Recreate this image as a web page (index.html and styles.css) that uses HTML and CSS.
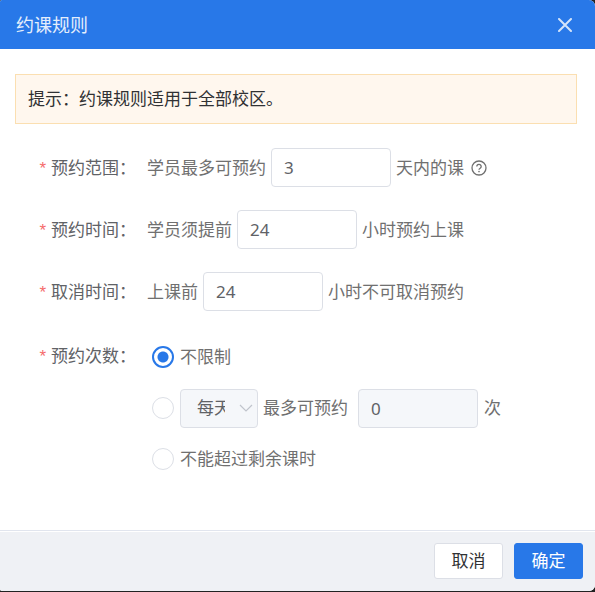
FILE: index.html
```html
<!DOCTYPE html>
<html lang="zh-CN">
<head>
  <meta charset="UTF-8">
  <meta name="viewport" content="width=device-width, initial-scale=1.0">
  <title>约课规则</title>
  <link rel="stylesheet" href="styles.css">
</head>
<body>
  <form class="dialog">
    <header class="dialog-header">
      <h1>约课规则</h1>
      <button type="button" class="close" aria-label="关闭">
        <svg width="14" height="14" viewBox="0 0 14 14"><path d="M1 1l12 12M13 1L1 13" stroke="currentColor" stroke-width="2" stroke-linecap="round"/></svg>
      </button>
    </header>

    <main class="dialog-body">
      <p class="tip">提示：约课规则适用于全部校区。</p>

      <div class="form-item">
        <label class="label" for="range">预约范围：</label>
        <div class="content">
          <span>学员最多可预约</span>
          <input type="text" id="range" class="input" value="3">
          <span>天内的课</span>
          <svg class="help" width="16" height="16" viewBox="0 0 16 16" fill="none" stroke="currentColor">
            <circle cx="8" cy="8" r="7" stroke-width="1.3"/>
            <path d="M5.800 6.500a2.200 2.100 0 1 1 3.400 1.700C8.400 8.700 8 9 8 9.800" stroke-width="1.300"/>
            <circle cx="8" cy="11.600" r=".8" fill="currentColor" stroke="none"/>
          </svg>
        </div>
      </div>

      <div class="form-item">
        <label class="label" for="before">预约时间：</label>
        <div class="content">
          <span>学员须提前</span>
          <input type="text" id="before" class="input" value="24">
          <span>小时预约上课</span>
        </div>
      </div>

      <div class="form-item">
        <label class="label" for="cancel">取消时间：</label>
        <div class="content">
          <span>上课前</span>
          <input type="text" id="cancel" class="input" value="24">
          <span>小时不可取消预约</span>
        </div>
      </div>

      <div class="form-item" role="radiogroup" aria-labelledby="times">
        <span class="label label-group" id="times">预约次数：</span>
        <div class="options">
          <label class="option"><input type="radio" name="times" class="radio" checked>不限制</label>
          <div class="option">
            <input type="radio" name="times" class="radio" aria-label="限制次数">
            <span class="select-box">
              <select class="select" aria-label="周期" disabled>
                <option>每天</option>
                <option>每周</option>
                <option>每月</option>
              </select>
              <svg class="arrow" width="14" height="8" viewBox="0 0 14 8"><path d="M1 1l6 6 6-6" fill="none" stroke="currentColor" stroke-width="1.2"/></svg>
            </span>
            <label class="limit" for="limit">最多可预约</label>
            <input type="text" id="limit" class="input" value="0" disabled>
            <span>次</span>
          </div>
          <label class="option"><input type="radio" name="times" class="radio">不能超过剩余课时</label>
        </div>
      </div>
    </main>

    <footer class="dialog-footer">
      <button type="button" class="btn">取消</button>
      <button type="submit" class="btn btn-primary">确定</button>
    </footer>
  </form>
</body>
</html>
```

FILE: styles.css
```css
* {
  box-sizing: border-box;
}
body {
  margin: 0;
  background: #222;
  font-family: "Noto Sans", "Noto Sans CJK SC", sans-serif;
  font-size: 17px;
  line-height: 24px;
  color: #606266;
}
input, select, button {
  font: inherit;
  color: inherit;
}
.dialog {
  display: flex;
  flex-direction: column;
  min-height: calc(100vh - 1px);
  background: #fff;
  border-radius: 2px 6px 6px 2px;
  overflow: hidden;
}
.dialog-header {
  display: flex;
  align-items: center;
  justify-content: space-between;
  height: 49px;
  padding: 0 16px;
  background: #2878e8;
  color: #e4eefc;
}
.dialog-header h1 {
  margin: 0;
  font-size: 18px;
  font-weight: 400;
}
.close {
  display: flex;
  padding: 7px;
  border: none;
  background: none;
  color: #d4e4fa;
  cursor: pointer;
}
.dialog-body {
  flex: 1;
  padding: 25px 18px 16px 15px;
}
.tip {
  margin: 0 0 24px;
  padding: 12px;
  border: 1px solid #fbdfb1;
  background: #fff7ee;
  color: #303133;
}
.form-item {
  display: flex;
  margin-bottom: 23px;
}
.label {
  width: 132px;
  padding-right: 11px;
  line-height: 39px;
  text-align: right;
  white-space: nowrap;
}
.label::before {
  content: "*";
  margin-right: 5px;
  font-family: "Liberation Sans", Arial, sans-serif;
  line-height: 1;
  color: #f56c6c;
}
.label-group {
  line-height: 44px;
}
.content, .option {
  display: flex;
  align-items: center;
  gap: 6px;
  white-space: nowrap;
  color: #707070;
}
.content {
  gap: 5px;
}
.help {
  margin-left: 2px;
}
.input {
  width: 120px;
  height: 39px;
  padding: 0 12px;
  border: 1px solid #dcdfe6;
  border-radius: 4px;
  background: #fff;
  color: #606266;
}
.input:disabled, .select:disabled {
  background: #f5f7fa;
  color: #606266;
  opacity: 1;
}
.options {
  display: grid;
  gap: 11px;
  padding: 3px 0 0 5px;
}
.option {
  min-height: 40px;
}
.radio {
  appearance: none;
  width: 22px;
  height: 22px;
  margin: 0;
  border: 1px solid #dcdfe6;
  border-radius: 50%;
  background: #fff;
}
.radio:checked {
  border: 2px solid #2878e8;
  background: radial-gradient(circle, #2878e8 5px, #fff 6px);
}
.select-box {
  position: relative;
}
.select {
  appearance: none;
  display: block;
  width: 78px;
  height: 39px;
  padding: 0 32px 0 16px;
  border: 1px solid #dcdfe6;
  border-radius: 4px;
}
.arrow {
  position: absolute;
  top: 15px;
  right: 5px;
  color: #c0c4cc;
  pointer-events: none;
}
.limit {
  margin: 0 4px 0 -1px;
}
.dialog-footer {
  display: flex;
  justify-content: flex-end;
  gap: 11px;
  padding: 11px 12px 12px;
  border-top: 1px solid #fff;
  background: #eff1f5;
  box-shadow: 0 -1px #e1e5ee;
}
.btn {
  min-width: 69px;
  height: 36px;
  padding: 0 16px;
  border: 1px solid #dcdfe6;
  border-radius: 3px;
  background: #fff;
  color: #303133;
  cursor: pointer;
}
.btn-primary {
  border-color: #2878e8;
  background: #2878e8;
  color: #fff;
}
```
